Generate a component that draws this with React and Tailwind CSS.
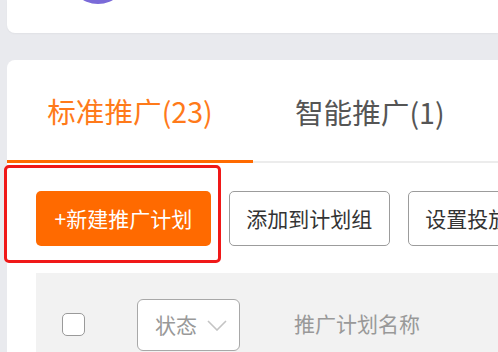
export default function App() {
  return (
    <div
      className="w-[498px] h-[352px] overflow-hidden bg-[#e9eaee] pl-[7px]"
      style={{ fontFamily: '"Noto Sans CJK SC", "Liberation Sans", sans-serif' }}
    >
      {/* top card, mostly scrolled off */}
      <div className="h-[33px] overflow-hidden rounded-bl-[8px] bg-white shadow-[0_1px_2px_rgba(0,0,0,0.04)]">
        <div className="ml-[61px] -mt-[56px] h-[60px] w-[60px] rounded-full bg-[#7a6ad8]" />
      </div>

      <div className="relative mt-[27px] h-[400px] rounded-tl-[8px] bg-white">
        {/* tabs */}
        <div className="flex h-[103px] border-b-[2px] border-[#ececec]">
          <div className="-mb-[2px] flex w-[246px] items-center justify-center border-b-[3px] border-[#ff6a00] pt-[3px] text-[28.6px] text-[#ff7a1a]">
            标准推广(23)
          </div>
          <div className="flex items-center pl-[42px] pt-[3px] text-[28.6px] text-[#555]">
            智能推广(1)
          </div>
        </div>

        {/* actions */}
        <div className="mt-[28px] flex gap-[18px] pl-[29px]">
          <button className="h-[55px] shrink-0 rounded-[5px] bg-[#ff6a00] px-[18.5px] text-[21px] text-white">
            +新建推广计划
          </button>
          <button className="h-[55px] shrink-0 rounded-[5px] border border-[#9c9c9c] px-[16.5px] text-[21px] text-[#333]">
            添加到计划组
          </button>
          <button className="h-[55px] shrink-0 rounded-[5px] border border-[#9c9c9c] px-[16.5px] text-[21px] text-[#333]">
            设置投放时间
          </button>
        </div>

        {/* annotation */}
        <div className="absolute left-[-3px] top-[105px] h-[98px] w-[217px] rounded-[5px] border-[3px] border-[#f01818]" />

        {/* table header */}
        <div className="ml-[29px] mt-[27px] flex h-[110px] items-start bg-[#f2f2f2] pt-[26px]">
          <div className="ml-[26px] mt-[14px] h-[23px] w-[23px] rounded-[5px] border-[1.5px] border-[#9a9a9a] bg-white" />
          <div className="ml-[52px] flex h-[52px] w-[103px] items-center rounded-[6px] border-[1.5px] border-[#a8a8a8] bg-white pl-[17px] text-[21px] text-[#999]">
            状态
            <svg className="ml-[10px]" width="20" height="11" viewBox="0 0 20 11" fill="none">
              <path d="M1 1l9 9 9-9" stroke="#c4c4c4" strokeWidth="1.6" />
            </svg>
          </div>
          <div className="ml-[54px] mt-[14px] text-[21px] leading-none text-[#999]">推广计划名称</div>
        </div>
      </div>
    </div>
  );
}
